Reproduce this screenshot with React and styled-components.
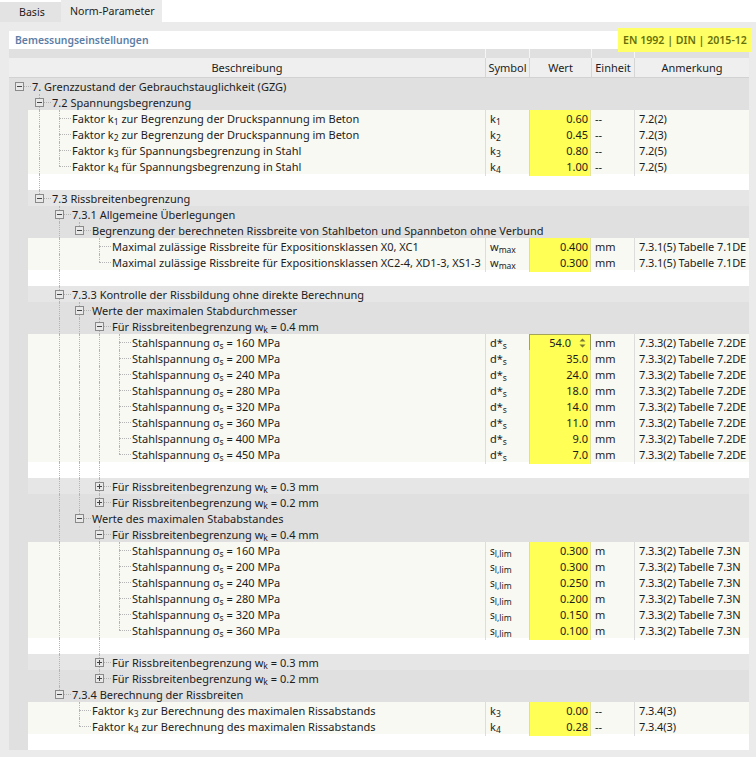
import React from 'react';
import styled, { createGlobalStyle } from 'styled-components';

const GlobalStyle = createGlobalStyle`
    html, body {
        margin: 0;
        padding: 0;
        background: #ffffff;
    }
    body {
        font-family: "Noto Sans", "Open Sans", sans-serif;
        font-size: 11px;
        color: #1c1c1c;
    }
`;

const COLUMNS = '476px 44px 62px 43px 115px';
const LINE = '#b4b4b4';

const Page = styled.div`
    width: 756px;
    height: 757px;
    overflow: hidden;
`;

const TabBar = styled.div`
    display: flex;
    align-items: flex-end;
    height: 22px;
`;

const Tab = styled.div`
    display: flex;
    align-items: center;
    box-sizing: border-box;
    height: ${(p) => (p.$active ? '22px' : '20px')};
    width: ${(p) => (p.$active ? '101px' : '61px')};
    padding-left: ${(p) => (p.$active ? '9px' : '19px')};
    font-size: 10.6px;
    background: ${(p) => (p.$active ? '#ebebeb' : '#e3e3e3')};
`;

const Panel = styled.div`
    background: #ebebeb;
    padding: 9px 7px 7px 9px;
    height: 735px;
    box-sizing: border-box;
`;

const TitleBar = styled.div`
    position: relative;
    display: flex;
    align-items: center;
    height: 18px;
    padding-left: 6px;
    background: #ffffff;
`;

const Title = styled.div`
    font-weight: 600;
    font-size: 10.4px;
    color: #5c7ea6;
`;

const NormBadge = styled.div`
    position: absolute;
    top: -3px;
    right: -3px;
    width: 134px;
    height: 24px;
    display: flex;
    align-items: center;
    justify-content: center;
    background: #ffff66;
    color: #66700a;
    font-weight: 600;
    font-size: 10.6px;
    white-space: nowrap;
`;

const Band = styled.div`
    display: grid;
    grid-template-columns: ${COLUMNS};
    height: 9px;
    background: #e0e0e0;
`;

const BandCell = styled.div`
    border-left: ${(p) => (p.$first ? 'none' : '1px solid #f5f5f5')};
`;

const HeaderRow = styled.div`
    display: grid;
    grid-template-columns: ${COLUMNS};
    height: 19px;
    background: #efefef;
    border-bottom: 1px solid #d2d2d2;
`;

const HeaderCell = styled.div`
    display: flex;
    align-items: center;
    justify-content: center;
    border-left: ${(p) => (p.$first ? 'none' : '1px solid #d6d6d6')};
    white-space: nowrap;
`;

const Row = styled.div`
    display: grid;
    grid-template-columns: ${COLUMNS};
    height: 16px;
    line-height: 18px;
    background: ${(p) => {
        if (p.$kind === 'data') return '#f8f9f3';
        if (p.$kind === 'blank') return '#ffffff';
        return p.$light ? '#e6e6e6' : '#e0e0e0';
    }};
`;

const TreeCell = styled.div`
    display: flex;
    height: 16px;
    white-space: nowrap;
    grid-column: ${(p) => (p.$wide ? '1 / -1' : 'auto')};
`;

const Gutter = styled.div`
    flex: none;
    width: 19px;
    height: 16px;
    background: #e0e0e0;
`;

const Guide = styled.div`
    flex: none;
    width: 8px;
    height: 16px;
    margin-left: 11px;
    border-left: 1px dotted ${(p) => (p.$show ? LINE : 'transparent')};
`;

const Marker = styled.div`
    position: relative;
    flex: none;
    width: ${(p) => (p.$root ? '23px' : '24px')};
    height: 16px;

    &::before {
        content: '';
        display: ${(p) => (p.$root ? 'none' : 'block')};
        position: absolute;
        left: 11px;
        top: 0;
        height: ${(p) => (p.$last ? '8px' : '16px')};
        border-left: 1px dotted ${LINE};
    }

    &::after {
        content: '';
        position: absolute;
        left: ${(p) => (p.$root ? '10px' : '11px')};
        right: 1px;
        top: 8px;
        border-top: 1px dotted ${LINE};
    }
`;

const Toggle = styled.span`
    position: absolute;
    z-index: 1;
    left: ${(p) => (p.$root ? '6px' : '7px')};
    top: 4px;
    width: 9px;
    height: 9px;
    box-sizing: border-box;
    border: 1px solid #8a8a8a;
    background: #e8e8e8;

    &::before {
        content: '';
        position: absolute;
        left: 1px;
        right: 1px;
        top: 3px;
        height: 1px;
        background: #444444;
    }

    &::after {
        content: '';
        display: ${(p) => (p.$open ? 'none' : 'block')};
        position: absolute;
        top: 1px;
        bottom: 1px;
        left: 3px;
        width: 1px;
        background: #444444;
    }
`;

const Sub = styled.span`
    font-size: 8.5px;
    position: relative;
    top: 2px;
    line-height: 0;
`;

const Symbol = styled.div`
    padding-left: 4px;
    border-left: 1px solid #dddddd;
    white-space: nowrap;
    font-size: ${(p) => (p.$small ? '10px' : 'inherit')};
`;

const Value = styled.div`
    display: flex;
    justify-content: flex-end;
    box-sizing: border-box;
    padding-right: 2px;
    background: #ffff55;
    border-left: 1px solid #e0e08a;
    border-right: 1px solid #e3e39a;
`;

const Editor = styled(Value)`
    align-items: center;
    padding: 0 4px 0 0;
    border: 1px solid #a3a35a;
    line-height: 16px;
`;

const EditorText = styled.span`
    margin-right: 8px;
`;

const Unit = styled.div`
    padding-left: 4px;
`;

const Note = styled.div`
    padding-left: 4px;
    border-left: 1px solid #dddddd;
    white-space: nowrap;
    letter-spacing: -0.1px;
`;

const k = (n) => <>k<Sub>{n}</Sub></>;
const sigma = (mpa) => <>Stahlspannung σ<Sub>s</Sub> = {mpa} MPa</>;
const rissbreite = (w) => <>Für Rissbreitenbegrenzung w<Sub>k</Sub> = {w} mm</>;

const wmax = <>w<Sub>max</Sub></>;
const dStar = <>d*<Sub>s</Sub></>;
const sLim = <>s<Sub>l,lim</Sub></>;

const leaf = (label, sym, value, unit, note, extra = {}) => ({ label, sym, value, unit, note, leaf: true, ...extra });

const stabdurchmesser = [
    [160, '54.0'], [200, '35.0'], [240, '24.0'], [280, '18.0'],
    [320, '14.0'], [360, '11.0'], [400, '9.0'], [450, '7.0'],
].map(([mpa, val]) => leaf(sigma(mpa), dStar, val, 'mm', '7.3.3(2) Tabelle 7.2DE', { editing: mpa === 160 }));

const stababstand = [
    [160, '0.300'], [200, '0.300'], [240, '0.250'],
    [280, '0.200'], [320, '0.150'], [360, '0.100'],
].map(([mpa, val]) => leaf(sigma(mpa), sLim, val, 'm', '7.3.3(2) Tabelle 7.3N', { small: true }));

const tree = {
    label: '7. Grenzzustand der Gebrauchstauglichkeit (GZG)',
    children: [
        {
            label: '7.2 Spannungsbegrenzung',
            children: [
                leaf(<>Faktor {k(1)} zur Begrenzung der Druckspannung im Beton</>, k(1), '0.60', '--', '7.2(2)'),
                leaf(<>Faktor {k(2)} zur Begrenzung der Druckspannung im Beton</>, k(2), '0.45', '--', '7.2(3)'),
                leaf(<>Faktor {k(3)} für Spannungsbegrenzung in Stahl</>, k(3), '0.80', '--', '7.2(5)'),
                leaf(<>Faktor {k(4)} für Spannungsbegrenzung in Stahl</>, k(4), '1.00', '--', '7.2(5)'),
            ],
        },
        {
            label: '7.3 Rissbreitenbegrenzung',
            children: [
                {
                    label: '7.3.1 Allgemeine Überlegungen',
                    children: [
                        {
                            label: 'Begrenzung der berechneten Rissbreite von Stahlbeton und Spannbeton ohne Verbund',
                            children: [
                                leaf('Maximal zulässige Rissbreite für Expositionsklassen X0, XC1', wmax, '0.400', 'mm', '7.3.1(5) Tabelle 7.1DE'),
                                leaf('Maximal zulässige Rissbreite für Expositionsklassen XC2-4, XD1-3, XS1-3', wmax, '0.300', 'mm', '7.3.1(5) Tabelle 7.1DE'),
                            ],
                        },
                    ],
                },
                {
                    label: '7.3.3 Kontrolle der Rissbildung ohne direkte Berechnung',
                    children: [
                        {
                            label: 'Werte der maximalen Stabdurchmesser',
                            children: [
                                { label: rissbreite('0.4'), children: stabdurchmesser },
                                { label: rissbreite('0.3'), collapsed: true },
                                { label: rissbreite('0.2'), collapsed: true },
                            ],
                        },
                        {
                            label: 'Werte des maximalen Stababstandes',
                            children: [
                                { label: rissbreite('0.4'), children: stababstand },
                                { label: rissbreite('0.3'), collapsed: true },
                                { label: rissbreite('0.2'), collapsed: true },
                            ],
                        },
                    ],
                },
                {
                    label: '7.3.4 Berechnung der Rissbreiten',
                    children: [
                        leaf(<>Faktor {k(3)} zur Berechnung des maximalen Rissabstands</>, k(3), '0.00', '--', '7.3.4(3)'),
                        leaf(<>Faktor {k(4)} zur Berechnung des maximalen Rissabstands</>, k(4), '0.28', '--', '7.3.4(3)'),
                    ],
                },
            ],
        },
    ],
};

// Baum in flache Zeilen umwandeln, guides = welche Ebenen noch eine Linie brauchen
const flatten = (node, depth, guides, last, out) => {
    out.push({ ...node, depth, guides, last, kind: node.leaf ? 'data' : 'group' });
    const kids = node.children || [];
    const nextGuides = depth === 0 ? [] : [...guides, !last];
    kids.forEach((child, i) => flatten(child, depth + 1, nextGuides, i === kids.length - 1, out));
    if (kids.length && kids[0].leaf) {
        out.push({ kind: 'blank', guides: nextGuides, depth: depth + 1 });
    }
    return out;
};

const rows = flatten(tree, 0, [], true, []);

const Tree = ({ row }) => (
    <TreeCell $wide={row.kind === 'group'}>
        {row.depth > 0 && <Gutter />}
        {row.guides.map((show, i) => <Guide key={i} $show={show} />)}
        {row.kind !== 'blank' && (
            <Marker $root={row.depth === 0} $last={row.last}>
                {row.kind === 'group' && <Toggle $root={row.depth === 0} $open={!row.collapsed} />}
            </Marker>
        )}
        {row.kind !== 'blank' && <span>{row.label}</span>}
    </TreeCell>
);

const App = () => {
    const headers = ['Beschreibung', 'Symbol', 'Wert', 'Einheit', 'Anmerkung'];

    return (
        <Page>
            <GlobalStyle />
            <TabBar>
                <Tab>Basis</Tab>
                <Tab $active>Norm-Parameter</Tab>
            </TabBar>
            <Panel>
                <TitleBar>
                    <Title>Bemessungseinstellungen</Title>
                    <NormBadge>EN 1992 | DIN | 2015-12</NormBadge>
                </TitleBar>
                <Band>
                    {headers.map((h, i) => <BandCell key={h} $first={i === 0} />)}
                </Band>
                <HeaderRow>
                    {headers.map((h, i) => <HeaderCell key={h} $first={i === 0}>{h}</HeaderCell>)}
                </HeaderRow>
                {rows.map((row, i) => (
                    <Row key={i} $kind={row.kind} $light={i > 0 && rows[i - 1].kind === 'blank'}>
                        <Tree row={row} />
                        {row.kind === 'data' && (
                            <>
                                <Symbol $small={row.small}>{row.sym}</Symbol>
                                {row.editing ? (
                                    <Editor>
                                        <EditorText>{row.value}</EditorText>
                                        <svg width="7" height="10" viewBox="0 0 7 10">
                                            <path d="M3.5 0.5 L6.5 3.5 L0.5 3.5 Z M0.5 6.5 L6.5 6.5 L3.5 9.5 Z" fill="#77773a" />
                                        </svg>
                                    </Editor>
                                ) : (
                                    <Value>{row.value}</Value>
                                )}
                                <Unit>{row.unit}</Unit>
                                <Note>{row.note}</Note>
                            </>
                        )}
                    </Row>
                ))}
            </Panel>
        </Page>
    );
};

export default App;
